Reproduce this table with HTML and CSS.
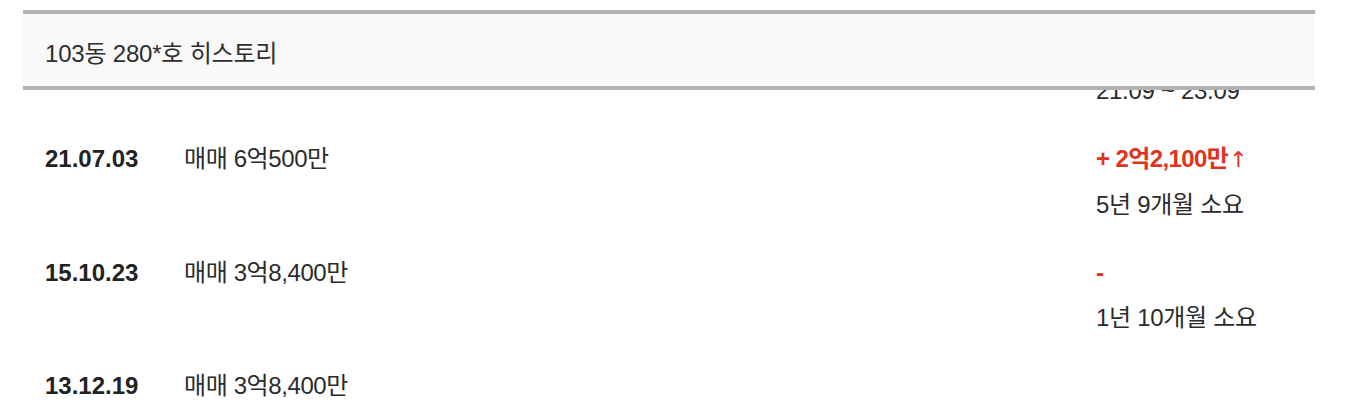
FILE: index.html
```html
<!DOCTYPE html>
<html lang="ko">
<head>
<meta charset="utf-8">
<title>103동 280*호 히스토리</title>
<link rel="stylesheet" href="styles.css">
</head>
<body>
<header class="sheet-head">
  <h1 class="sheet-title">103동 280*호 히스토리</h1>
</header>
<main class="history">
  <div class="row">
    <div class="date"></div>
    <div class="deal"></div>
    <div class="meta">
      <div class="diff"></div>
      <div class="period">21.09 ~ 23.09</div>
    </div>
  </div>
  <div class="row">
    <div class="date">21.07.03</div>
    <div class="deal">매매 6억500만</div>
    <div class="meta">
      <div class="diff">+ 2억2,100만<span class="arrow">↑</span></div>
      <div class="period">5년 9개월 소요</div>
    </div>
  </div>
  <div class="row">
    <div class="date">15.10.23</div>
    <div class="deal">매매 3억8,400만</div>
    <div class="meta">
      <div class="diff">-</div>
      <div class="period">1년 10개월 소요</div>
    </div>
  </div>
  <div class="row">
    <div class="date">13.12.19</div>
    <div class="deal">매매 3억8,400만</div>
    <div class="meta">
      <div class="diff"></div>
      <div class="period"></div>
    </div>
  </div>
</main>
</body>
</html>
```
FILE: styles.css
```css
html, body {
  margin: 0;
  padding: 0;
  background: #ffffff;
}

body {
  font-family: "Liberation Sans", "Noto Sans CJK KR", sans-serif;
  color: #2b2b2b;
  font-size: 24px;
  overflow: hidden;
}

.sheet-head {
  position: fixed;
  top: 10px;
  left: 23px;
  width: 1292px;
  height: 80px;
  box-sizing: border-box;
  background: #f9f9f9;
  border-top: 4px solid #b3b3b3;
  border-bottom: 4px solid #b3b3b3;
  display: flex;
  align-items: center;
  padding: 3px 22px 0;
  z-index: 2;
}

.sheet-title {
  margin: 0;
  font-size: 24px;
  font-weight: normal;
  letter-spacing: -0.2px;
  color: #2e2e2e;
}

.history {
  padding: 11px 0 0 45px;
}

.row {
  display: grid;
  grid-template-columns: 139px 912px auto;
  padding: 11.5px 0;
  line-height: 45px;
}

.date {
  font-weight: bold;
  color: #222222;
}

.deal {
  letter-spacing: -0.4px;
}

.meta {
  display: flex;
  flex-direction: column;
}

.diff {
  min-height: 45px;
  font-weight: bold;
  color: #e0321f;
  letter-spacing: -0.6px;
}

.arrow {
  font-family: "DejaVu Sans", sans-serif;
  font-weight: normal;
  font-size: 22px;
  margin-left: 1px;
}

.period {
  min-height: 45px;
  letter-spacing: -0.3px;
}
```
